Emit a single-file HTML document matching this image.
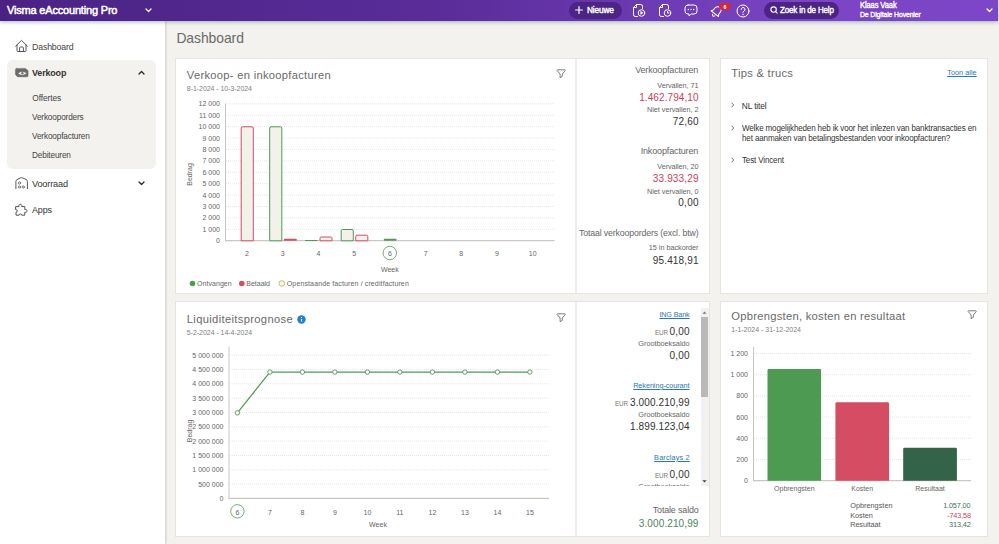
<!DOCTYPE html>
<html lang="nl"><head><meta charset="utf-8"><title>Dashboard - Visma eAccounting Pro</title>
<style>
*{box-sizing:border-box;margin:0;padding:0}
html,body{width:999px;height:544px;overflow:hidden}
body{position:relative;background:#f3f2ee;font-family:"Liberation Sans",sans-serif;color:#3a3a3a}
.t{position:absolute;white-space:nowrap;line-height:20px;height:20px}
header{position:absolute;left:0;top:0;width:998px;height:21px;background:linear-gradient(90deg,#4a2283 0%,#5a2d9a 45%,#7a44c4 80%,#7d46c8 100%);box-shadow:0 1px 4px rgba(20,60,80,.38);z-index:5;color:#fff}
.pill{position:absolute;top:2px;height:16.500px;border-radius:8.500px;background:#4b2486}
nav{position:absolute;left:0;top:21px;width:165px;height:523px;background:#fff;box-shadow:1px 0 2px rgba(0,0,0,.16)}
nav .grp{position:absolute;left:7px;top:39px;width:149px;height:109px;border-radius:6px;background:#f3f2ee}
nav svg,header svg,.card svg.ic{position:absolute;overflow:visible}
main{position:absolute;left:0;top:0;width:999px;height:544px}
.card{position:absolute;background:#fff;border:1px solid #e6e4de}
.card .div{position:absolute;top:0;width:2px;height:100%;background:#efeeea}
.lnk{text-decoration:underline;text-decoration-thickness:.5px;text-underline-offset:.5px}
svg.chart{position:absolute;left:0;top:0;overflow:visible}
svg text{font-family:"Liberation Sans",sans-serif}
</style></head><body>
<header>
<span class="t" style="top:0.00px;font-size:11.00px;color:#fff;-webkit-text-stroke:0.51px;letter-spacing:-0.183px;left:7.00px;">Visma eAccounting Pro</span>
<svg style="left:144.5px;top:8px" width="7" height="5" viewBox="0 0 7 5"><path d="M1 1l2.5 2.5L6 1" fill="none" stroke="#fff" stroke-width="1.3" stroke-linecap="round" stroke-linejoin="round"/></svg>
<div class="pill" style="left:569px;width:52.5px"></div>
<svg style="left:575.4px;top:6.200px" width="8" height="8" viewBox="0 0 8 8"><path d="M4 .6v6.800M.6 4h6.800" stroke="#fff" stroke-width="1.200" stroke-linecap="round"/></svg>
<span class="t" style="top:0.00px;font-size:8.30px;color:#fff;-webkit-text-stroke:0.38px;letter-spacing:-0.149px;left:587.00px;transform-origin:0 50%;transform:scaleX(0.999);">Nieuwe</span>
<div class="pill" style="left:764px;width:75px"></div>
<svg style="left:770px;top:6.200px" width="8" height="8" viewBox="0 0 8 8"><circle cx="3.6" cy="3.6" r="2.7" fill="none" stroke="#fff" stroke-width="1.1"/><path d="M5.6 5.6l1.6 1.6" stroke="#fff" stroke-width="1.1" stroke-linecap="round"/></svg>
<span class="t" style="top:0.00px;font-size:8.60px;color:#fff;-webkit-text-stroke:0.40px;letter-spacing:-0.155px;left:780.00px;transform-origin:0 50%;transform:scaleX(0.929);">Zoek in de Help</span>
<span class="t" style="top:-5.00px;font-size:8.50px;color:#fff;-webkit-text-stroke:0.39px;letter-spacing:-0.153px;left:860.00px;transform-origin:0 50%;transform:scaleX(0.895);">Klaas Vaak</span>
<span class="t" style="top:5.00px;font-size:7.30px;color:#fff;-webkit-text-stroke:0.34px;letter-spacing:-0.131px;left:860.00px;transform-origin:0 50%;transform:scaleX(0.943);">De Digitale Hovenier</span>
<svg style="left:985.5px;top:8px" width="7" height="5" viewBox="0 0 7 5"><path d="M1 1l2.5 2.5L6 1" fill="none" stroke="#fff" stroke-width="1.3" stroke-linecap="round" stroke-linejoin="round"/></svg>
<svg style="left:632px;top:3px" width="14" height="15" viewBox="0 0 14 15" fill="none" stroke="#fff" stroke-width="1" stroke-linecap="round" stroke-linejoin="round"><path d="M5.5 13.5H3.2A1.7 1.7 0 0 1 1.5 11.8V4.5l3-3h4.3A1.7 1.7 0 0 1 10.500 3.2v2.300"/><path d="M4.500 1.500v3h-3"/><circle cx="9.500" cy="10" r="3.300"/><path d="M8.700 8.600v2.800l2.200-1.400z" fill="#fff" stroke-width=".5"/></svg>
<svg style="left:658px;top:3px" width="14" height="15" viewBox="0 0 14 15" fill="none" stroke="#fff" stroke-width="1" stroke-linecap="round" stroke-linejoin="round"><path d="M5.500 13.500H3.200A1.700 1.700 0 0 1 1.500 11.800V4.500l3-3h4.300A1.700 1.700 0 0 1 10.500 3.200v2.300"/><path d="M4.500 1.500v3h-3"/><circle cx="9.500" cy="10" r="3.300"/><path d="M9.500 8.300V10h1.600"/></svg>
<svg style="left:684px;top:4px" width="14" height="13" viewBox="0 0 14 13" fill="none" stroke="#fff" stroke-width="1" stroke-linecap="round" stroke-linejoin="round"><path d="M4 1h6A3 3 0 0 1 13 4v3A3 3 0 0 1 10 10H7.300L5 12V10H4A3 3 0 0 1 1 7V4A3 3 0 0 1 4 1z"/><path d="M4.300 5.500h.01M7 5.500h.01M9.700 5.500h.01" stroke-width="1.300"/></svg>
<svg style="left:709.5px;top:5px" width="13" height="13" viewBox="0 0 13 13" fill="none" stroke="#fff" stroke-width="1" stroke-linecap="round" stroke-linejoin="round"><g transform="rotate(38 6.5 6.5)"><path d="M6.500 1.300a3.400 3.400 0 0 1 3.400 3.400v2.600l1.300 1.900H1.800l1.300-1.900V4.700a3.400 3.400 0 0 1 3.400-3.400z"/><path d="M5.200 10.900a1.300 1.300 0 0 0 2.600 0"/></g></svg>
<div style="position:absolute;left:719px;top:3px;width:12px;height:7px;border-radius:3.5px;background:#d6263a"></div>
<span class="t" style="top:-3.00px;font-size:5.20px;color:#fff;font-weight:700;left:725.00px;transform:translateX(-50%);">6</span>
<svg style="left:736px;top:3.500px" width="14" height="14" viewBox="0 0 14 14" fill="none" stroke="#fff" stroke-width="1" stroke-linecap="round" stroke-linejoin="round"><circle cx="7" cy="7" r="6"/><path d="M5.200 5.400a1.900 1.900 0 1 1 2.700 1.700c-.6.300-.9.700-.9 1.300v.3"/><path d="M7 10.500h.01" stroke-width="1.300"/></svg>
</header>
<nav>
<div class="grp"></div>
<svg style="left:15px;top:18px" width="13" height="14" viewBox="0 0 13 14" fill="none" stroke="#444" stroke-width="0.9" stroke-linejoin="round" stroke-linecap="round"><path d="M.6 7.2L6.5 1.4l5.900 5.800"/><path d="M2 6v5.500a1 1 0 0 0 1 1h7a1 1 0 0 0 1-1V6"/><path d="M4.600 12.500V8.800a.8.800 0 0 1 .8-.8h2.200a.8.800 0 0 1 .8.800v3.700"/></svg>
<a class="t" style="top:16.00px;font-size:9.30px;color:#444;letter-spacing:-0.167px;left:32.30px;transform-origin:0 50%;transform:scaleX(0.944);">Dashboard</a>
<svg style="left:15px;top:47px" width="14" height="9" viewBox="0 0 14 9" fill="none" stroke="#444" stroke-width="0.9" stroke-linejoin="round" stroke-linecap="round"><rect x=".4" y=".4" width="11" height="7" rx="1.300" fill="#7a7a7a" stroke="#666" stroke-width=".5"/><rect x="1.700" y="1.900" width="11.300" height="6.800" rx="1.300" fill="#707070" stroke="#555" stroke-width=".6"/><path d="M3.200 5.300Q7.300 2 11.500 5.300 7.300 8.600 3.200 5.300z" fill="#fff" stroke="none"/><circle cx="7.350" cy="5.300" r="1.300" fill="#777" stroke="none"/></svg>
<a class="t" style="top:42.00px;font-size:9.30px;color:#333;font-weight:700;letter-spacing:-0.167px;left:32.30px;transform-origin:0 50%;transform:scaleX(0.964);">Verkoop</a>
<svg style="left:137.5px;top:49.3px" width="7" height="5" viewBox="0 0 7 5"><path d="M1 4l2.5-2.5L6 4" fill="none" stroke="#2a2a2a" stroke-width="1.3" stroke-linecap="round" stroke-linejoin="round"/></svg>
<a class="t" style="top:67.00px;font-size:8.40px;color:#444;letter-spacing:-0.111px;left:32.30px;">Offertes</a>
<a class="t" style="top:86.00px;font-size:8.40px;color:#444;letter-spacing:-0.151px;left:32.30px;transform-origin:0 50%;transform:scaleX(0.982);">Verkooporders</a>
<a class="t" style="top:105.00px;font-size:8.40px;color:#444;letter-spacing:-0.151px;left:32.30px;transform-origin:0 50%;transform:scaleX(0.983);">Verkoopfacturen</a>
<a class="t" style="top:124.00px;font-size:8.40px;color:#444;letter-spacing:-0.151px;left:32.30px;transform-origin:0 50%;transform:scaleX(0.982);">Debiteuren</a>
<svg style="left:15px;top:156px" width="13" height="12" viewBox="0 0 13 12" fill="none" stroke="#444" stroke-width="0.9" stroke-linejoin="round" stroke-linecap="round"><path d="M.9 11.600V4.400Q.9 3.200 2 2.600L5.600 .9Q6.650 .5 7.700 .9L11.300 2.600Q12.400 3.200 12.400 4.400V11.600"/><circle cx="4.400" cy="6" r="1.150" stroke-width=".65"/><circle cx="4.400" cy="10" r="1.150" stroke-width=".65"/><circle cx="8.200" cy="10" r="1.150" stroke-width=".65"/></svg>
<a class="t" style="top:153.00px;font-size:9.30px;color:#333;letter-spacing:-0.167px;left:32.30px;transform-origin:0 50%;transform:scaleX(0.985);">Voorraad</a>
<svg style="left:137.5px;top:159.5px" width="7" height="5" viewBox="0 0 7 5"><path d="M1 1l2.5 2.5L6 1" fill="none" stroke="#2a2a2a" stroke-width="1.3" stroke-linecap="round" stroke-linejoin="round"/></svg>
<svg style="left:15px;top:182px" width="13.5" height="13" viewBox="0 0 13.5 13" fill="none" stroke="#444" stroke-width="0.9" stroke-linejoin="round" stroke-linecap="round"><path d="M1 3.600H4.100a1.500 1.500 0 1 1 2.600 0H9.800V6.600a1.500 1.500 0 1 1 0 2.600V12.200H6.700a1.300 1.300 0 1 0-2.600 0H1V9.200a1.300 1.300 0 1 0 0-2.600z"/></svg>
<a class="t" style="top:179.00px;font-size:9.30px;color:#333;letter-spacing:-0.167px;left:32.30px;transform-origin:0 50%;transform:scaleX(0.966);">Apps</a>
</nav>
<main>
<h1 class="t" style="top:28.00px;font-size:13.90px;color:#6a6a6a;font-weight:400;letter-spacing:-0.058px;left:176.40px;">Dashboard</h1>
<section class="card " style="left:175px;top:58px;width:535px;height:236px">
<h2 class="t" style="top:6.00px;font-size:11.20px;color:#6a6a6a;font-weight:400;letter-spacing:0.284px;left:10.80px;">Verkoop- en inkoopfacturen</h2>
<span class="t" style="top:20.00px;font-size:7.00px;color:#808080;letter-spacing:-0.051px;left:10.80px;">8-1-2024 - 10-3-2024</span>
<svg class="ic" style="left:379.7px;top:10.2px" width="10" height="10" viewBox="0 0 10 10"><path d="M1.600 .8h7.200a.5.500 0 0 1 .4.800L6.300 5v2.400L4.100 8.600V5L1.200 1.600a.5.500 0 0 1 .4-.8z" fill="none" stroke="#5a5a5a" stroke-width=".8" stroke-linejoin="round"/></svg>
<div class="div" style="left:399px"></div>
<svg class="chart" width="533" height="234" viewBox="176 59 533 234">
<text x="220" y="243.30" text-anchor="end" font-size="7" fill="#666">0</text>
<path d="M226 229.38H554.500" stroke="#dddbd7" stroke-width=".7" stroke-dasharray="1 1"/>
<text x="220" y="231.88" text-anchor="end" font-size="7" fill="#666">1 000</text>
<path d="M226 217.97H554.500" stroke="#dddbd7" stroke-width=".7" stroke-dasharray="1 1"/>
<text x="220" y="220.47" text-anchor="end" font-size="7" fill="#666">2 000</text>
<path d="M226 206.55H554.500" stroke="#dddbd7" stroke-width=".7" stroke-dasharray="1 1"/>
<text x="220" y="209.05" text-anchor="end" font-size="7" fill="#666">3 000</text>
<path d="M226 195.13H554.500" stroke="#dddbd7" stroke-width=".7" stroke-dasharray="1 1"/>
<text x="220" y="197.63" text-anchor="end" font-size="7" fill="#666">4 000</text>
<path d="M226 183.72H554.500" stroke="#dddbd7" stroke-width=".7" stroke-dasharray="1 1"/>
<text x="220" y="186.22" text-anchor="end" font-size="7" fill="#666">5 000</text>
<path d="M226 172.30H554.500" stroke="#dddbd7" stroke-width=".7" stroke-dasharray="1 1"/>
<text x="220" y="174.80" text-anchor="end" font-size="7" fill="#666">6 000</text>
<path d="M226 160.88H554.500" stroke="#dddbd7" stroke-width=".7" stroke-dasharray="1 1"/>
<text x="220" y="163.38" text-anchor="end" font-size="7" fill="#666">7 000</text>
<path d="M226 149.46H554.500" stroke="#dddbd7" stroke-width=".7" stroke-dasharray="1 1"/>
<text x="220" y="151.96" text-anchor="end" font-size="7" fill="#666">8 000</text>
<path d="M226 138.05H554.500" stroke="#dddbd7" stroke-width=".7" stroke-dasharray="1 1"/>
<text x="220" y="140.55" text-anchor="end" font-size="7" fill="#666">9 000</text>
<path d="M226 126.63H554.500" stroke="#dddbd7" stroke-width=".7" stroke-dasharray="1 1"/>
<text x="220" y="129.13" text-anchor="end" font-size="7" fill="#666">10 000</text>
<path d="M226 115.21H554.500" stroke="#dddbd7" stroke-width=".7" stroke-dasharray="1 1"/>
<text x="220" y="117.71" text-anchor="end" font-size="7" fill="#666">11 000</text>
<path d="M226 103.80H554.500" stroke="#dddbd7" stroke-width=".7" stroke-dasharray="1 1"/>
<text x="220" y="106.30" text-anchor="end" font-size="7" fill="#666">12 000</text>
<path d="M225.500 103.500V241.30" stroke="#c9c7c4" stroke-width="1"/>
<path d="M225 240.70H554.500" stroke="#c9c7c4" stroke-width="1.2"/>
<text transform="translate(192 174.500) rotate(-90)" text-anchor="middle" font-size="7" fill="#666">Bedrag</text>
<path d="M241.20 240.80V128.10a1.300 1.300 0 0 1 1.300-1.300H252.00a1.300 1.300 0 0 1 1.300 1.300V240.80z" fill="#f3f2ea" stroke="#d44d62" stroke-width="1"/>
<path d="M269.70 240.80V128.10a1.300 1.300 0 0 1 1.300-1.300H280.50a1.300 1.300 0 0 1 1.300 1.300V240.80z" fill="#f3f2ea" stroke="#4d9b53" stroke-width="1"/>
<rect x="283.800" y="238.800" width="13" height="2" rx=".8" fill="#d44d62"/>
<rect x="305" y="240" width="12.500" height="1" fill="#4d9b53"/>
<path d="M320.00 240.80V238.30a1.300 1.300 0 0 1 1.300-1.300H330.70a1.300 1.300 0 0 1 1.300 1.300V240.80z" fill="#f3f2ea" stroke="#d44d62" stroke-width="1"/>
<path d="M341.20 240.80V230.80a1.300 1.300 0 0 1 1.300-1.300H352.00a1.300 1.300 0 0 1 1.300 1.300V240.80z" fill="#f3f2ea" stroke="#4d9b53" stroke-width="1"/>
<path d="M355.70 240.80V236.50a1.300 1.300 0 0 1 1.300-1.300H366.50a1.300 1.300 0 0 1 1.300 1.300V240.80z" fill="#f3f2ea" stroke="#d44d62" stroke-width="1"/>
<rect x="383.800" y="238.800" width="12.700" height="2" rx=".8" fill="#4d9b53"/>
<text x="247.00" y="256.300" text-anchor="middle" font-size="7" fill="#666">2</text>
<text x="282.72" y="256.300" text-anchor="middle" font-size="7" fill="#666">3</text>
<text x="318.44" y="256.300" text-anchor="middle" font-size="7" fill="#666">4</text>
<text x="354.16" y="256.300" text-anchor="middle" font-size="7" fill="#666">5</text>
<text x="389.88" y="256.300" text-anchor="middle" font-size="7" fill="#666">6</text>
<text x="425.60" y="256.300" text-anchor="middle" font-size="7" fill="#666">7</text>
<text x="461.32" y="256.300" text-anchor="middle" font-size="7" fill="#666">8</text>
<text x="497.04" y="256.300" text-anchor="middle" font-size="7" fill="#666">9</text>
<text x="532.76" y="256.300" text-anchor="middle" font-size="7" fill="#666">10</text>
<circle cx="389.800" cy="253" r="6.700" fill="none" stroke="#4d9b53" stroke-width=".8"/>
<text x="389.800" y="271.800" text-anchor="middle" font-size="7" fill="#666">Week</text>
<circle cx="192.500" cy="283.500" r="2.800" fill="#4d9b53"/>
<text x="197" y="286" font-size="7" fill="#666" textLength="34.700">Ontvangen</text>
<circle cx="241.800" cy="283.500" r="2.800" fill="#d44d62"/>
<text x="246.300" y="286" font-size="7" fill="#666" textLength="23.700">Betaald</text>
<circle cx="281.800" cy="283.500" r="2.800" fill="#f7f5e6" stroke="#c2ae45" stroke-width=".8"/>
<text x="286.800" y="286" font-size="7" fill="#666" textLength="122">Openstaande facturen / creditfacturen</text>
</svg>
<span class="t" style="top:1.00px;font-size:9.30px;color:#666;letter-spacing:-0.167px;right:10.66px;transform-origin:100% 50%;transform:scaleX(0.967);">Verkoopfacturen</span>
<span class="t" style="top:17.00px;font-size:7.30px;color:#666;letter-spacing:-0.080px;right:10.58px;">Vervallen, 71</span>
<span class="t" style="top:29.00px;font-size:10.00px;color:#cf4257;letter-spacing:0.084px;right:10.42px;">1.462.794,10</span>
<span class="t" style="top:41.00px;font-size:7.30px;color:#666;letter-spacing:-0.057px;right:10.56px;">Niet vervallen, 2</span>
<span class="t" style="top:53.00px;font-size:10.00px;color:#333;letter-spacing:0.174px;right:10.33px;">72,60</span>
<span class="t" style="top:82.00px;font-size:9.30px;color:#666;letter-spacing:-0.167px;right:10.66px;transform-origin:100% 50%;transform:scaleX(0.972);">Inkoopfacturen</span>
<span class="t" style="top:98.00px;font-size:7.30px;color:#666;letter-spacing:-0.080px;right:10.58px;">Vervallen, 20</span>
<span class="t" style="top:110.00px;font-size:10.00px;color:#cf4257;letter-spacing:0.156px;right:10.34px;">33.933,29</span>
<span class="t" style="top:123.00px;font-size:7.30px;color:#666;letter-spacing:-0.057px;right:10.56px;">Niet vervallen, 0</span>
<span class="t" style="top:134.00px;font-size:10.00px;color:#333;letter-spacing:0.233px;right:10.27px;">0,00</span>
<span class="t" style="top:164.00px;font-size:9.30px;color:#666;letter-spacing:-0.167px;right:10.66px;transform-origin:100% 50%;transform:scaleX(0.944);">Totaal verkooporders (excl. btw)</span>
<span class="t" style="top:179.00px;font-size:7.30px;color:#666;letter-spacing:-0.044px;right:10.54px;">15 in backorder</span>
<span class="t" style="top:192.00px;font-size:10.00px;color:#333;letter-spacing:0.156px;right:10.34px;">95.418,91</span>
</section>
<section class="card " style="left:720px;top:58px;width:268px;height:236px">
<h2 class="t" style="top:4.00px;font-size:11.20px;color:#6a6a6a;font-weight:400;letter-spacing:0.279px;left:10.20px;">Tips &amp; trucs</h2>
<a class="t lnk" style="top:4.00px;font-size:7.30px;color:#2a78b5;letter-spacing:0.015px;right:10.38px;">Toon alle</a>
<svg class="ic" style="left:9.8px;top:43.3px" width="4" height="6" viewBox="0 0 4 6"><path d="M.8 1L2.700 3 .8 5" fill="none" stroke="#444" stroke-width=".75" stroke-linecap="round" stroke-linejoin="round"/></svg>
<span class="t" style="top:37.00px;font-size:8.40px;color:#333;letter-spacing:-0.126px;left:20.80px;">NL titel</span>
<svg class="ic" style="left:9.8px;top:65.6px" width="4" height="6" viewBox="0 0 4 6"><path d="M.8 1L2.700 3 .8 5" fill="none" stroke="#444" stroke-width=".75" stroke-linecap="round" stroke-linejoin="round"/></svg>
<span class="t" style="top:59.00px;font-size:8.40px;color:#333;letter-spacing:-0.151px;left:20.80px;transform-origin:0 50%;transform:scaleX(0.960);">Welke mogelijkheden heb ik voor het inlezen van banktransacties en</span>
<span class="t" style="top:69.00px;font-size:8.40px;color:#333;letter-spacing:-0.151px;left:20.80px;transform-origin:0 50%;transform:scaleX(0.964);">het aanmaken van betalingsbestanden voor inkoopfacturen?</span>
<svg class="ic" style="left:9.8px;top:97.7px" width="4" height="6" viewBox="0 0 4 6"><path d="M.8 1L2.700 3 .8 5" fill="none" stroke="#444" stroke-width=".75" stroke-linecap="round" stroke-linejoin="round"/></svg>
<span class="t" style="top:91.00px;font-size:8.40px;color:#333;letter-spacing:-0.151px;left:20.80px;transform-origin:0 50%;transform:scaleX(0.957);">Test Vincent</span>
</section>
<section class="card " style="left:175px;top:301px;width:535px;height:236px">
<h2 class="t" style="top:7.00px;font-size:11.20px;color:#6a6a6a;font-weight:400;letter-spacing:0.335px;left:10.80px;">Liquiditeitsprognose</h2>
<svg class="ic" style="left:120.8px;top:12.9px" width="9" height="9" viewBox="0 0 9 9"><circle cx="4.500" cy="4.500" r="4.200" fill="#1b7fd6"/><path d="M4.500 4v2.600" stroke="#fff" stroke-width="1.200"/><circle cx="4.500" cy="2.500" r=".7" fill="#fff"/></svg>
<span class="t" style="top:21.00px;font-size:7.00px;color:#808080;letter-spacing:-0.041px;left:10.80px;">5-2-2024 - 14-4-2024</span>
<svg class="ic" style="left:379.6px;top:10.7px" width="10" height="10" viewBox="0 0 10 10"><path d="M1.600 .8h7.200a.5.500 0 0 1 .4.800L6.300 5v2.400L4.100 8.600V5L1.200 1.600a.5.500 0 0 1 .4-.8z" fill="none" stroke="#5a5a5a" stroke-width=".8" stroke-linejoin="round"/></svg>
<div class="div" style="left:399px"></div>
<svg class="chart" width="533" height="234" viewBox="176 302 533 234">
<text x="223.500" y="501.00" text-anchor="end" font-size="7" fill="#666">0</text>
<path d="M230 484.16H549" stroke="#dddbd7" stroke-width=".7" stroke-dasharray="1 1"/>
<text x="223.500" y="486.66" text-anchor="end" font-size="7" fill="#666">500 000</text>
<path d="M230 469.82H549" stroke="#dddbd7" stroke-width=".7" stroke-dasharray="1 1"/>
<text x="223.500" y="472.32" text-anchor="end" font-size="7" fill="#666">1 000 000</text>
<path d="M230 455.48H549" stroke="#dddbd7" stroke-width=".7" stroke-dasharray="1 1"/>
<text x="223.500" y="457.98" text-anchor="end" font-size="7" fill="#666">1 500 000</text>
<path d="M230 441.14H549" stroke="#dddbd7" stroke-width=".7" stroke-dasharray="1 1"/>
<text x="223.500" y="443.64" text-anchor="end" font-size="7" fill="#666">2 000 000</text>
<path d="M230 426.80H549" stroke="#dddbd7" stroke-width=".7" stroke-dasharray="1 1"/>
<text x="223.500" y="429.30" text-anchor="end" font-size="7" fill="#666">2 500 000</text>
<path d="M230 412.46H549" stroke="#dddbd7" stroke-width=".7" stroke-dasharray="1 1"/>
<text x="223.500" y="414.96" text-anchor="end" font-size="7" fill="#666">3 000 000</text>
<path d="M230 398.12H549" stroke="#dddbd7" stroke-width=".7" stroke-dasharray="1 1"/>
<text x="223.500" y="400.62" text-anchor="end" font-size="7" fill="#666">3 500 000</text>
<path d="M230 383.78H549" stroke="#dddbd7" stroke-width=".7" stroke-dasharray="1 1"/>
<text x="223.500" y="386.28" text-anchor="end" font-size="7" fill="#666">4 000 000</text>
<path d="M230 369.44H549" stroke="#dddbd7" stroke-width=".7" stroke-dasharray="1 1"/>
<text x="223.500" y="371.94" text-anchor="end" font-size="7" fill="#666">4 500 000</text>
<path d="M230 355.10H549" stroke="#dddbd7" stroke-width=".7" stroke-dasharray="1 1"/>
<text x="223.500" y="357.60" text-anchor="end" font-size="7" fill="#666">5 000 000</text>
<path d="M229 346.500V499.00" stroke="#c9c7c4" stroke-width="1"/>
<path d="M228.500 498.40H549" stroke="#c9c7c4" stroke-width="1.2"/>
<text transform="translate(192 431) rotate(-90)" text-anchor="middle" font-size="7" fill="#666">Bedrag</text>
<path d="M237.40 412.90 L269.90 372.10 L302.40 372.10 L334.90 372.10 L367.40 372.10 L399.90 372.10 L432.40 372.10 L464.90 372.10 L497.40 372.10 L529.90 372.10" fill="none" stroke="#4d9b53" stroke-width="1.200" stroke-linejoin="round"/>
<circle cx="237.40" cy="412.90" r="2.200" fill="#fff" stroke="#4d9b53" stroke-width=".9"/>
<circle cx="269.90" cy="372.10" r="2.200" fill="#fff" stroke="#4d9b53" stroke-width=".9"/>
<circle cx="302.40" cy="372.10" r="2.200" fill="#fff" stroke="#4d9b53" stroke-width=".9"/>
<circle cx="334.90" cy="372.10" r="2.200" fill="#fff" stroke="#4d9b53" stroke-width=".9"/>
<circle cx="367.40" cy="372.10" r="2.200" fill="#fff" stroke="#4d9b53" stroke-width=".9"/>
<circle cx="399.90" cy="372.10" r="2.200" fill="#fff" stroke="#4d9b53" stroke-width=".9"/>
<circle cx="432.40" cy="372.10" r="2.200" fill="#fff" stroke="#4d9b53" stroke-width=".9"/>
<circle cx="464.90" cy="372.10" r="2.200" fill="#fff" stroke="#4d9b53" stroke-width=".9"/>
<circle cx="497.40" cy="372.10" r="2.200" fill="#fff" stroke="#4d9b53" stroke-width=".9"/>
<circle cx="529.90" cy="372.10" r="2.200" fill="#fff" stroke="#4d9b53" stroke-width=".9"/>
<text x="237.40" y="514.500" text-anchor="middle" font-size="7" fill="#666">6</text>
<text x="269.90" y="514.500" text-anchor="middle" font-size="7" fill="#666">7</text>
<text x="302.40" y="514.500" text-anchor="middle" font-size="7" fill="#666">8</text>
<text x="334.90" y="514.500" text-anchor="middle" font-size="7" fill="#666">9</text>
<text x="367.40" y="514.500" text-anchor="middle" font-size="7" fill="#666">10</text>
<text x="399.90" y="514.500" text-anchor="middle" font-size="7" fill="#666">11</text>
<text x="432.40" y="514.500" text-anchor="middle" font-size="7" fill="#666">12</text>
<text x="464.90" y="514.500" text-anchor="middle" font-size="7" fill="#666">13</text>
<text x="497.40" y="514.500" text-anchor="middle" font-size="7" fill="#666">14</text>
<text x="529.90" y="514.500" text-anchor="middle" font-size="7" fill="#666">15</text>
<circle cx="237.400" cy="511.300" r="6.700" fill="none" stroke="#4d9b53" stroke-width=".8"/>
<text x="378" y="527" text-anchor="middle" font-size="7" fill="#666">Week</text>
</svg>
<div class="scroll" style="position:absolute;left:400.5px;top:6px;width:132px;height:177.5px;overflow:hidden">
<a class="t lnk" style="top:-3.00px;font-size:7.30px;color:#2a78b5;letter-spacing:-0.131px;right:19.03px;transform-origin:100% 50%;transform:scaleX(0.986);">ING Bank</a>
<span class="t" style="top:14.00px;font-size:10.00px;color:#333;letter-spacing:0.208px;right:18.69px;">0,00</span>
<span class="t" style="top:15.00px;font-size:7.30px;color:#777;letter-spacing:-0.131px;right:40.71px;transform-origin:100% 50%;transform:scaleX(0.870);">EUR</span>
<span class="t" style="top:26.00px;font-size:7.30px;color:#666;letter-spacing:-0.020px;right:18.92px;">Grootboeksaldo</span>
<span class="t" style="top:38.00px;font-size:10.00px;color:#333;letter-spacing:0.208px;right:18.69px;">0,00</span>
<a class="t lnk" style="top:68.00px;font-size:7.30px;color:#2a78b5;letter-spacing:-0.078px;right:18.98px;">Rekening-courant</a>
<span class="t" style="top:85.00px;font-size:10.00px;color:#333;letter-spacing:0.109px;right:18.79px;">3.000.210,99</span>
<span class="t" style="top:86.00px;font-size:7.30px;color:#777;letter-spacing:-0.131px;right:80.11px;transform-origin:100% 50%;transform:scaleX(0.870);">EUR</span>
<span class="t" style="top:97.00px;font-size:7.30px;color:#666;letter-spacing:-0.020px;right:18.92px;">Grootboeksaldo</span>
<span class="t" style="top:109.00px;font-size:10.00px;color:#333;letter-spacing:0.109px;right:18.79px;">1.899.123,04</span>
<a class="t lnk" style="top:140.00px;font-size:7.30px;color:#2a78b5;letter-spacing:0.158px;right:18.74px;">Barclays 2</a>
<span class="t" style="top:157.00px;font-size:10.00px;color:#333;letter-spacing:0.208px;right:18.69px;">0,00</span>
<span class="t" style="top:158.00px;font-size:7.30px;color:#777;letter-spacing:-0.131px;right:40.71px;transform-origin:100% 50%;transform:scaleX(0.870);">EUR</span>
<span class="t" style="top:169.00px;font-size:7.30px;color:#666;letter-spacing:-0.020px;right:18.92px;">Grootboeksaldo</span>
<div style="position:absolute;left:124.5px;top:0;width:7.500px;height:177.5px;background:#f1f1f1"></div>
<div style="position:absolute;left:124.9px;top:8.5px;width:6.500px;height:80px;background:#b9b9b9"></div>
<svg class="ic" style="left:125.7px;top:2.5px" width="5" height="3" viewBox="0 0 5 3"><path d="M.5 2.800L2.500 .6 4.500 2.800z" fill="#777"/></svg>
<svg class="ic" style="left:125.7px;top:172px" width="5" height="3" viewBox="0 0 5 3"><path d="M.3 .2L2.500 2.600 4.700 .2z" fill="#444"/></svg>
</div>
<span class="t" style="top:198.00px;font-size:9.30px;color:#666;letter-spacing:-0.167px;right:10.76px;transform-origin:100% 50%;transform:scaleX(0.963);">Totale saldo</span>
<span class="t" style="top:212.00px;font-size:10.00px;color:#4c8560;letter-spacing:0.109px;right:10.49px;">3.000.210,99</span>
</section>
<section class="card " style="left:720px;top:301px;width:268px;height:236px">
<h2 class="t" style="top:4.00px;font-size:11.20px;color:#6a6a6a;font-weight:400;letter-spacing:0.274px;left:10.20px;">Opbrengsten, kosten en resultaat</h2>
<span class="t" style="top:18.00px;font-size:7.00px;color:#808080;letter-spacing:-0.011px;left:10.20px;">1-1-2024 - 31-12-2024</span>
<svg class="ic" style="left:246.1px;top:7.6px" width="10" height="10" viewBox="0 0 10 10"><path d="M1.600 .8h7.200a.5.500 0 0 1 .4.800L6.300 5v2.400L4.100 8.600V5L1.200 1.600a.5.500 0 0 1 .4-.8z" fill="none" stroke="#5a5a5a" stroke-width=".8" stroke-linejoin="round"/></svg>
<svg class="chart" width="266" height="234" viewBox="721 302 266 234">
<text x="748" y="483.20" text-anchor="end" font-size="7" fill="#666">0</text>
<path d="M754 459.50H971" stroke="#dddbd7" stroke-width=".7" stroke-dasharray="1 1"/>
<text x="748" y="462.00" text-anchor="end" font-size="7" fill="#666">200</text>
<path d="M754 438.30H971" stroke="#dddbd7" stroke-width=".7" stroke-dasharray="1 1"/>
<text x="748" y="440.80" text-anchor="end" font-size="7" fill="#666">400</text>
<path d="M754 417.10H971" stroke="#dddbd7" stroke-width=".7" stroke-dasharray="1 1"/>
<text x="748" y="419.60" text-anchor="end" font-size="7" fill="#666">600</text>
<path d="M754 395.90H971" stroke="#dddbd7" stroke-width=".7" stroke-dasharray="1 1"/>
<text x="748" y="398.40" text-anchor="end" font-size="7" fill="#666">800</text>
<path d="M754 374.70H971" stroke="#dddbd7" stroke-width=".7" stroke-dasharray="1 1"/>
<text x="748" y="377.20" text-anchor="end" font-size="7" fill="#666">1 000</text>
<path d="M754 353.50H971" stroke="#dddbd7" stroke-width=".7" stroke-dasharray="1 1"/>
<text x="748" y="356.00" text-anchor="end" font-size="7" fill="#666">1 200</text>
<path d="M753.500 347V481.20" stroke="#c9c7c4" stroke-width="1"/>
<path d="M753 480.60H971" stroke="#c9c7c4" stroke-width="1.2"/>
<path d="M767.50 480.70V370.10a1.200 1.200 0 0 1 1.200-1.200H819.90a1.200 1.200 0 0 1 1.200 1.200V480.70z" fill="#4d9b53"/>
<path d="M835.40 480.70V403.40a1.200 1.200 0 0 1 1.200-1.200H887.80a1.200 1.200 0 0 1 1.200 1.200V480.70z" fill="#d44d62"/>
<path d="M903.20 480.70V448.90a1.200 1.200 0 0 1 1.200-1.200H955.70a1.200 1.200 0 0 1 1.200 1.200V480.70z" fill="#33644a"/>
<text x="794.300" y="491" text-anchor="middle" font-size="7" fill="#666">Opbrengsten</text>
<text x="862.200" y="491" text-anchor="middle" font-size="7" fill="#666">Kosten</text>
<text x="930" y="491" text-anchor="middle" font-size="7" fill="#666">Resultaat</text>
</svg>
<span class="t" style="top:194.00px;font-size:7.30px;color:#555;letter-spacing:0.014px;left:129.20px;">Opbrengsten</span>
<span class="t" style="top:204.00px;font-size:7.30px;color:#555;letter-spacing:-0.010px;left:129.20px;">Kosten</span>
<span class="t" style="top:213.00px;font-size:7.30px;color:#555;letter-spacing:-0.075px;left:129.20px;">Resultaat</span>
<span class="t" style="top:194.00px;font-size:7.30px;color:#3f7358;letter-spacing:-0.131px;right:16.33px;transform-origin:100% 50%;transform:scaleX(0.993);">1.057,00</span>
<span class="t" style="top:204.00px;font-size:7.30px;color:#cf4257;letter-spacing:-0.131px;right:16.33px;transform-origin:100% 50%;transform:scaleX(0.993);">-743,58</span>
<span class="t" style="top:213.00px;font-size:7.30px;color:#3f7358;letter-spacing:-0.112px;right:16.31px;">313,42</span>
</section>
</main>
</body></html>
